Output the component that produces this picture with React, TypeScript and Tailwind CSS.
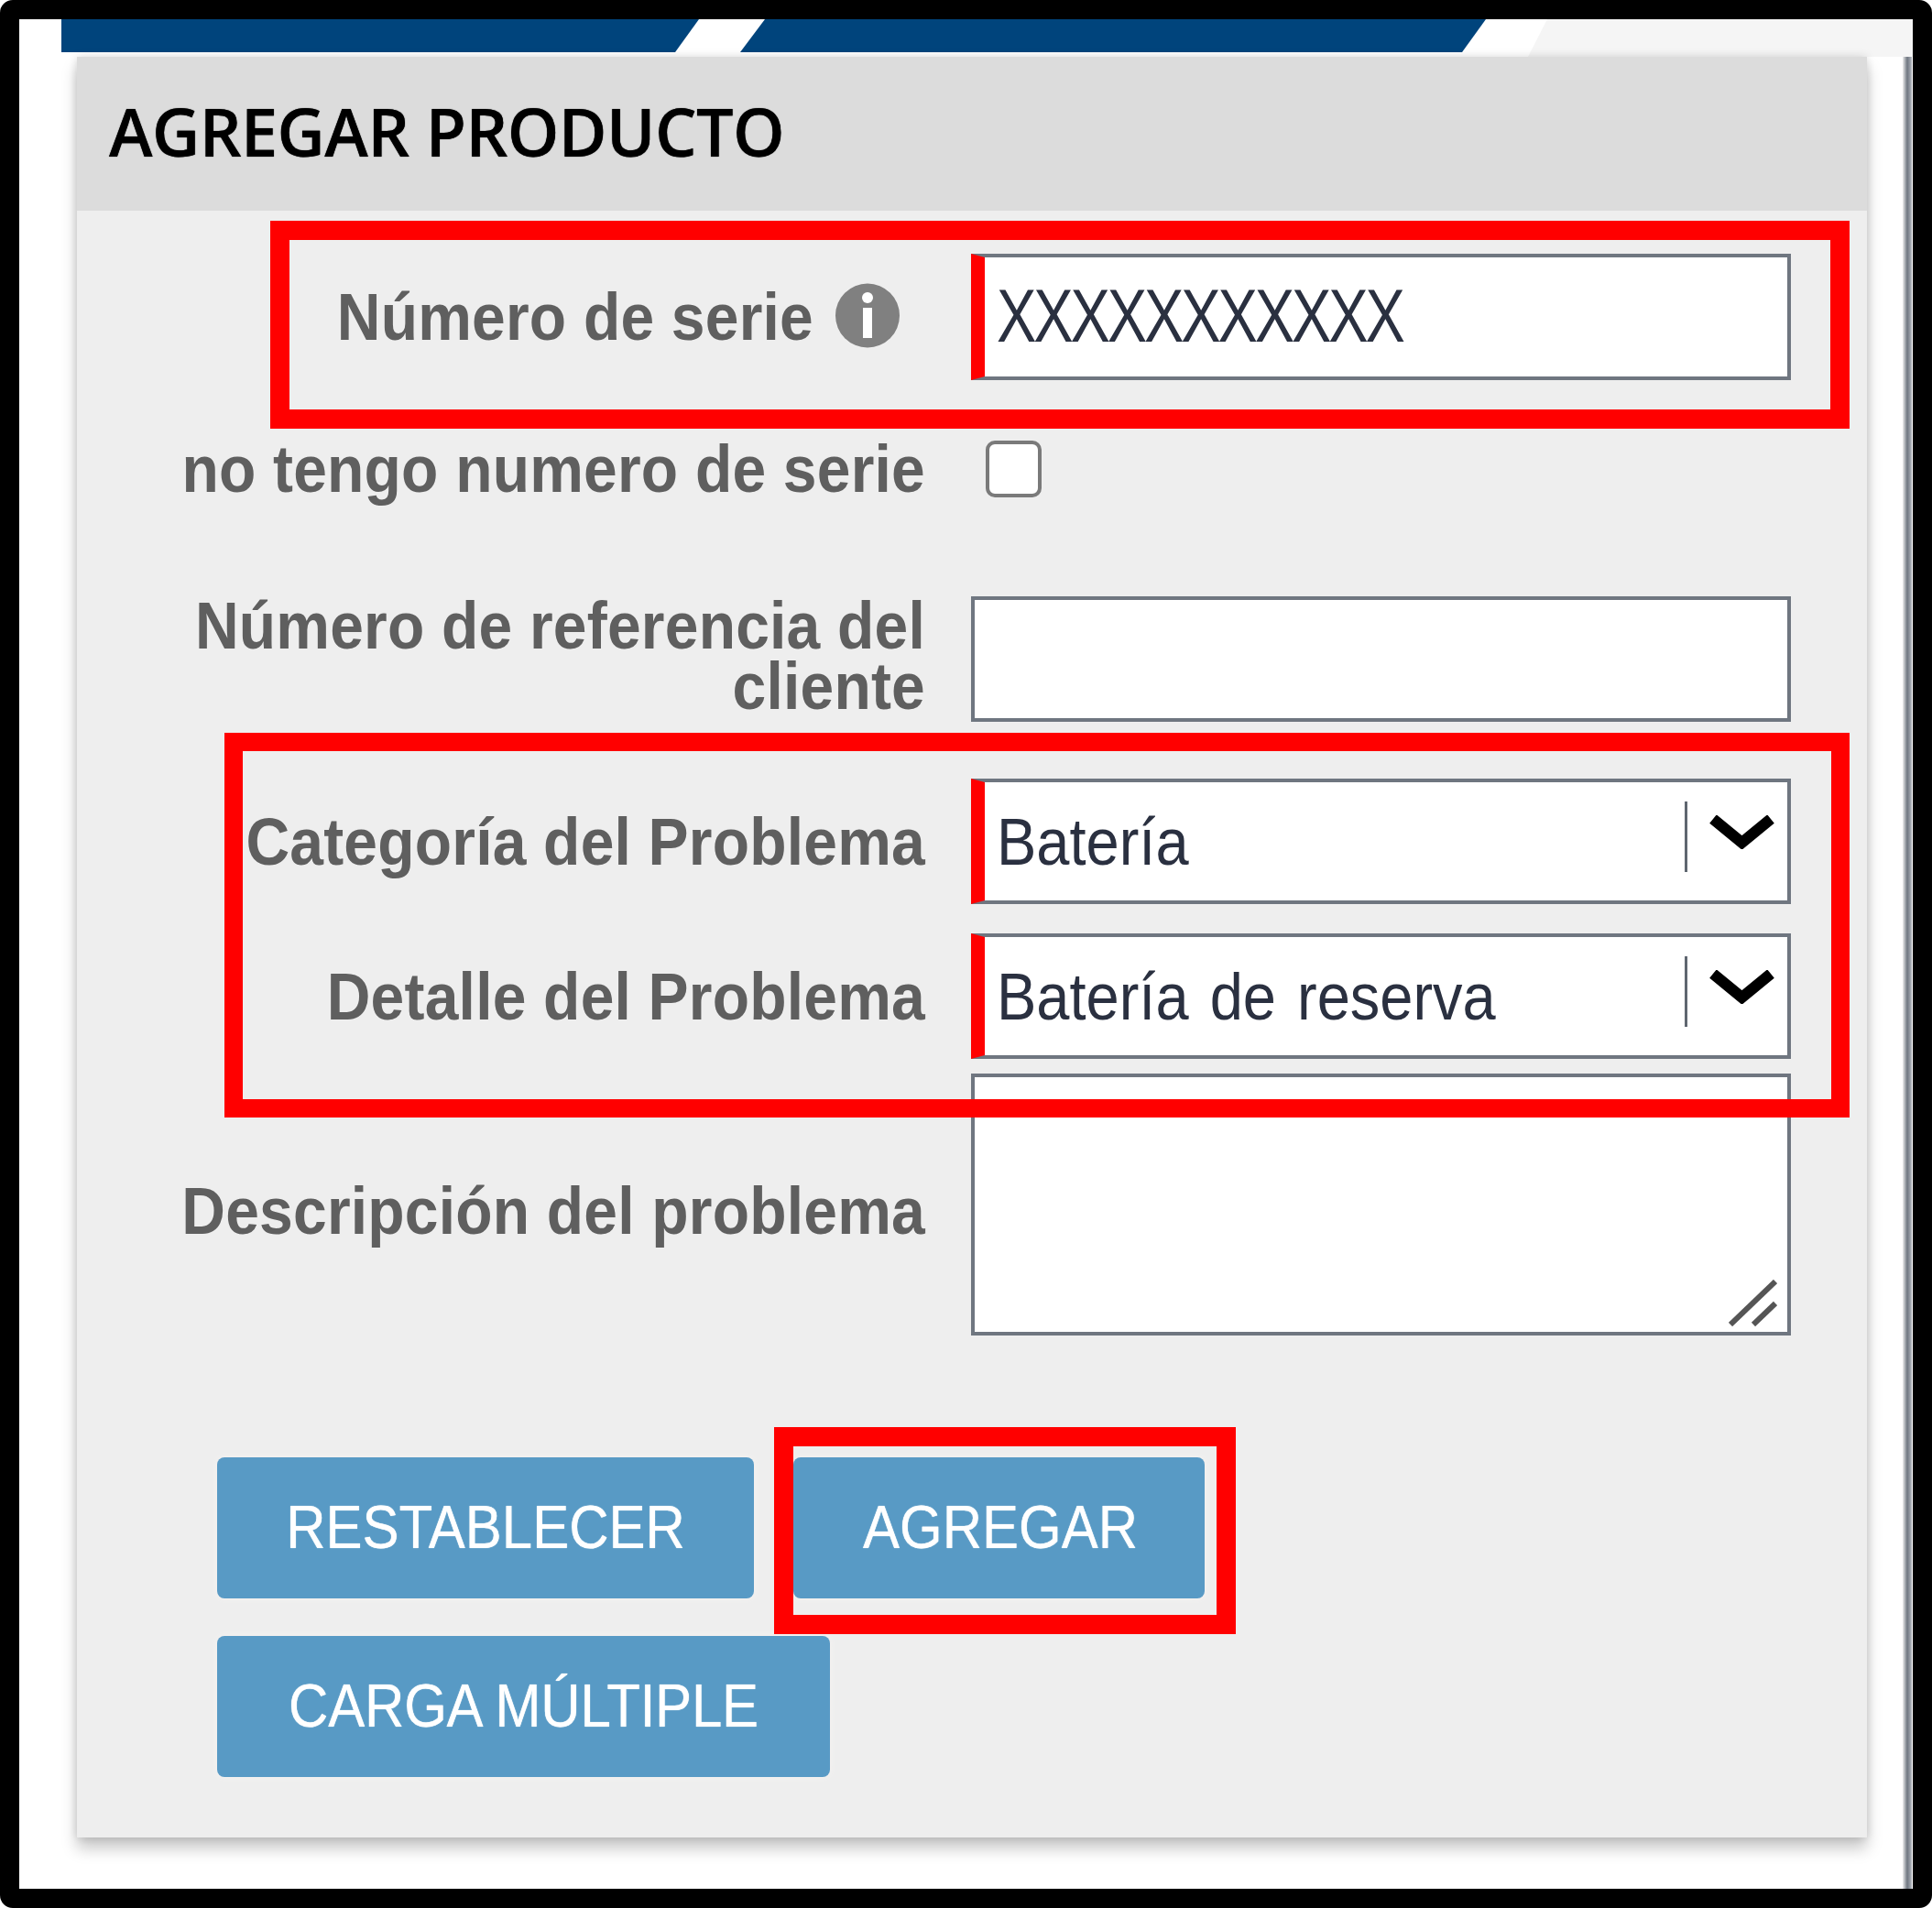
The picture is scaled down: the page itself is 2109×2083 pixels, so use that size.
const redBox = 'absolute border-solid border-[#ff0000] pointer-events-none';
const labelClass = "w-[926px] shrink-0 text-right font-['Liberation_Sans',sans-serif] font-bold text-[#5f5f5f] text-[66px] leading-[66px] tracking-[0.2px]";
const fieldText = "inline-block origin-center scale-y-[1.12] font-['Liberation_Sans',sans-serif] text-[65px] text-[#2a3040]";
const fieldBorder = 'border-solid border-[4px] border-[#6f7680]';
const buttonClass = "h-[154px] rounded-lg bg-[#589ac5] flex items-center justify-center font-['Liberation_Sans',sans-serif] text-[60px] text-white [text-shadow:0_0_1px_#fff] shadow-[0_0_6px_#f7f4f2]";

function Chevron() {
  return (
    <svg width="71" height="37" viewBox="0 0 71 37" className="absolute left-[791px] top-[36px]" fill="none">
      <path d="M4 4 L35.5 30 L67 4" stroke="#000000" strokeWidth="12" />
    </svg>
  );
}

function SelectBox({ value }: { value: string }) {
  return (
    <div className={`relative w-[895px] h-[137px] bg-white ${fieldBorder} border-l-[15px] border-l-[#ff0000] flex items-center pl-[13px]`}>
      <span className={`${fieldText} [word-spacing:5px]`}>{value}</span>
      <div className="absolute left-[764px] top-[21px] w-[3px] h-[77px] bg-[#5f6670]" />
      <Chevron />
    </div>
  );
}

function FieldLabel({ children }: { children: React.ReactNode }) {
  return <span className="inline-block origin-center scale-y-[1.1]">{children}</span>;
}

function Row({ label, className, children }: { label: React.ReactNode; className: string; children: React.ReactNode }) {
  return (
    <div className={`flex items-center gap-[50px] ${className}`}>
      <div className={labelClass}>{label}</div>
      {children}
    </div>
  );
}

export default function App() {
  return (
    <div className="relative w-[2109px] h-[2083px] bg-white border-solid border-black border-x-[21px] border-t-[21px] border-b-[21px] rounded-[14px] overflow-hidden">
      {/* top stripes */}
      <svg width="2067" height="41" viewBox="0 0 2067 41" className="block">
        <polygon points="46,0 742,0 716,36 46,36" fill="#00447c" />
        <polygon points="814,0 1601,0 1575,36 787,36" fill="#00447c" />
        <polygon points="1668,0 2067,0 2067,41 1647,41" fill="#f5f5f5" />
      </svg>

      {/* right edge of the browser window */}
      <div className="absolute left-[2056px] top-[41px] w-[10px] h-[2000px] bg-gradient-to-r from-[#f0f0f0] via-[#6f7680] to-[#b5b9c0]" />

      <div className="ml-[63px] w-[1954px] h-[1944px] bg-[#eeeeee] blur-[0.7px] shadow-[0_12px_16px_rgba(0,0,0,0.22),0_0_10px_rgba(0,0,0,0.14)]">
        <div className="h-[168px] bg-[#dcdcdc] flex items-center pl-[35px]">
          <h2 className="font-['Open_Sans',sans-serif] font-semibold text-[72px] text-black leading-none tracking-[-0.6px] mb-[6px] [text-shadow:0_0_1px_#000]">
            AGREGAR PRODUCTO
          </h2>
        </div>

        <Row label={
          <span className="flex items-center justify-end gap-[24px] pr-[28px]">
            <FieldLabel>Número de serie</FieldLabel>
            <svg width="70" height="71" viewBox="0 0 70 71" className="-mt-[3px]">
              <circle cx="35" cy="35.5" r="35" fill="#808080" />
              <rect x="30" y="27" width="10" height="33" fill="#ffffff" />
              <circle cx="35" cy="16" r="6" fill="#ffffff" />
            </svg>
          </span>
        } className="mt-[47px]">
          <div className={`w-[895px] h-[138px] bg-white ${fieldBorder} border-l-[15px] border-l-[#ff0000] flex items-center pl-[13px]`}>
            <span className={`${fieldText} tracking-[-3.1px] text-[#1f2d4d] scale-y-[1.24] font-normal`}>XXXXXXXXXXX</span>
          </div>
        </Row>

        <Row label={<FieldLabel>no tengo numero de serie</FieldLabel>} className="mt-[66px] h-[62px]">
          <input type="checkbox" className="appearance-none ml-[16px] w-[61px] h-[62px] bg-white border-solid border-[4px] border-[#7a7a7a] rounded-[10px]" />
        </Row>

        <Row label={<div className="-mt-[7px]"><FieldLabel>Número de referencia del</FieldLabel><br /><FieldLabel>cliente</FieldLabel></div>} className="mt-[108px]">
          <input type="text" className={`w-[895px] h-[137px] bg-white ${fieldBorder}`} />
        </Row>

        <Row label={<FieldLabel>Categoría del Problema</FieldLabel>} className="mt-[62px]">
          <SelectBox value="Batería" />
        </Row>

        <Row label={<FieldLabel>Detalle del Problema</FieldLabel>} className="mt-[32px]">
          <SelectBox value="Batería de reserva" />
        </Row>

        <Row label={<div className="pt-[13px]"><FieldLabel>Descripción del problema</FieldLabel></div>} className="mt-[16px]">
          <div className="relative w-[895px] h-[286px]">
            <textarea className={`block w-full h-full resize-none bg-white ${fieldBorder}`} />
            <svg width="53" height="51" viewBox="0 0 53 51" className="absolute right-[15px] bottom-[10px]" fill="none" stroke="#555555" strokeWidth="6">
              <path d="M2 49 L51 2" />
              <path d="M27 49 L51 26" />
            </svg>
          </div>
        </Row>

        <div className="mt-[133px] ml-[153px] flex gap-[43px]">
          <button className={`${buttonClass} w-[586px]`}><span className="inline-block scale-y-[1.12]">RESTABLECER</span></button>
          <button className={`${buttonClass} w-[449px]`}><span className="inline-block scale-y-[1.12] ml-[3px]">AGREGAR</span></button>
        </div>
        <div className="mt-[41px] ml-[153px]">
          <button className={`${buttonClass} w-[669px]`}><span className="inline-block scale-y-[1.12] tracking-[-0.2px]">CARGA MÚLTIPLE</span></button>
        </div>
      </div>

      {/* annotation boxes */}
      <div className={`${redBox} left-[274px] top-[220px] w-[1724px] h-[227px] border-x-[21px] border-y-[21px]`} />
      <div className={`${redBox} left-[224px] top-[779px] w-[1774px] h-[420px] border-x-[20px] border-y-[20px]`} />
      <div className={`${redBox} left-[824px] top-[1537px] w-[504px] h-[226px] border-x-[21px] border-y-[21px]`} />
    </div>
  );
}
